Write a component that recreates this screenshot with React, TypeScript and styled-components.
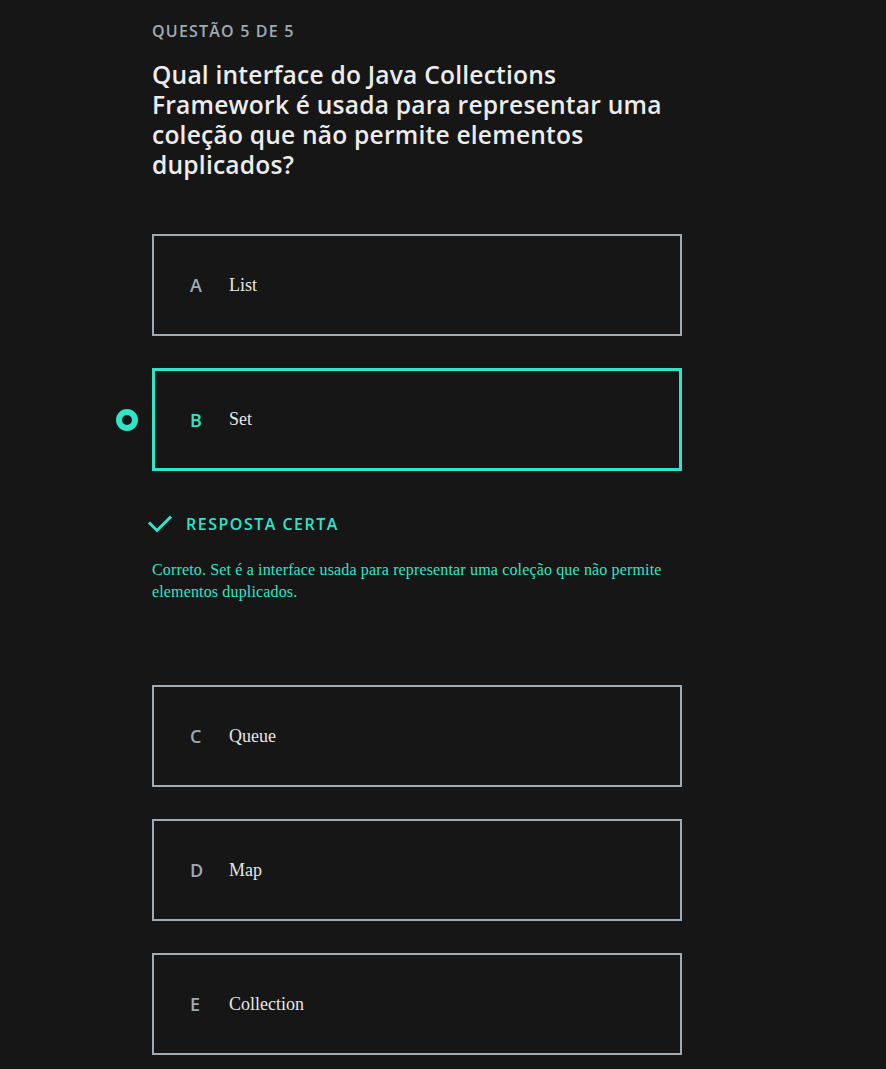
import React from "react";
import styled, { createGlobalStyle } from "styled-components";

const Global = createGlobalStyle`
  html, body { margin: 0; padding: 0; background: #161616; }
  body { font-family: "Open Sans", "Liberation Sans", sans-serif; }
`;

const TEAL = "#2ee5c9";
const GRAY = "#9eabb5";

const Page = styled.main`
  min-height: 1069px;
  background: #161616;
  padding: 20px 0 0 152px;
  box-sizing: border-box;
`;

const Column = styled.div`
  width: 530px;
  display: flex;
  flex-direction: column;
`;

const Counter = styled.div`
  font-family: "Open Sans", sans-serif;
  font-weight: 600;
  font-size: 16px;
  line-height: 22px;
  color: ${GRAY};
  letter-spacing: 1.2px;
  text-transform: uppercase;
`;

const Title = styled.h1`
  margin: 18px 0 54px;
  font-family: "Open Sans", sans-serif;
  font-weight: 600;
  font-size: 24.6px;
  line-height: 30px;
  letter-spacing: 0.2px;
  color: #ececec;
  width: 520px;
`;

const OptionList = styled.div`
  display: flex;
  flex-direction: column;
`;

const Card = styled.div<{ $selected?: boolean; $gap: number }>`
  position: relative;
  box-sizing: border-box;
  height: ${(p) => (p.$selected ? 103 : 102)}px;
  margin-bottom: ${(p) => p.$gap}px;
  border: ${(p) => (p.$selected ? `3px solid ${TEAL}` : `2px solid ${GRAY}`)};
  display: flex;
  align-items: center;
  padding-left: ${(p) => (p.$selected ? 35 : 36)}px;
`;

const Letter = styled.span<{ $selected?: boolean }>`
  width: 18px;
  margin-right: 21px;
  font-family: "Open Sans", sans-serif;
  font-weight: 600;
  font-size: 18px;
  color: ${(p) => (p.$selected ? TEAL : GRAY)};
`;

const OptionText = styled.span`
  font-family: "Liberation Serif", serif;
  font-size: 18px;
  color: #e6e6e6;
`;

const Radio = styled.span`
  position: absolute;
  left: -39px;
  top: 50%;
  width: 22px;
  height: 22px;
  margin-top: -11px;
  box-sizing: border-box;
  border-radius: 50%;
  border: 6px solid ${TEAL};
`;

const Feedback = styled.div`
  display: flex;
  flex-direction: column;
  margin-bottom: 82px;
`;

const Verdict = styled.div`
  display: flex;
  align-items: center;
  gap: 13px;
  margin-left: -5px;
  height: 24px;
  color: ${TEAL};
  font-family: "Open Sans", sans-serif;
  font-weight: 600;
  font-size: 16px;
  letter-spacing: 1.5px;
  text-transform: uppercase;
`;

const Explanation = styled.p`
  margin: 23px 0 0;
  font-family: "Liberation Serif", serif;
  font-size: 16px;
  line-height: 22px;
  letter-spacing: 0.15px;
  color: ${TEAL};
`;

const Check = () => (
  <svg width="26" height="20" viewBox="0 0 26 20" fill="none">
    <path d="M3 9.5 L10 16.5 L23 3.5" stroke={TEAL} strokeWidth="3" strokeLinecap="square" />
  </svg>
);

const options = [
  { l: "A", t: "List" },
  { l: "B", t: "Set", selected: true },
  { l: "C", t: "Queue" },
  { l: "D", t: "Map" },
  { l: "E", t: "Collection" },
];

export default function App() {
  return (
    <Page>
      <Global />
      <Column>
        <Counter>Questão 5 de 5</Counter>
        <Title>
          Qual interface do Java Collections Framework é usada para representar uma coleção que não permite
          elementos duplicados?
        </Title>
        <OptionList>
          {options.map((o) => (
            <React.Fragment key={o.l}>
              <Card $selected={o.selected} $gap={o.selected ? 41 : 32}>
                {o.selected && <Radio />}
                <Letter $selected={o.selected}>{o.l}</Letter>
                <OptionText>{o.t}</OptionText>
              </Card>
              {o.selected && (
                <Feedback>
                  <Verdict>
                    <Check />
                    Resposta certa
                  </Verdict>
                  <Explanation>
                    Correto. Set é a interface usada para representar uma coleção que não permite elementos
                    duplicados.
                  </Explanation>
                </Feedback>
              )}
            </React.Fragment>
          ))}
        </OptionList>
      </Column>
    </Page>
  );
}
